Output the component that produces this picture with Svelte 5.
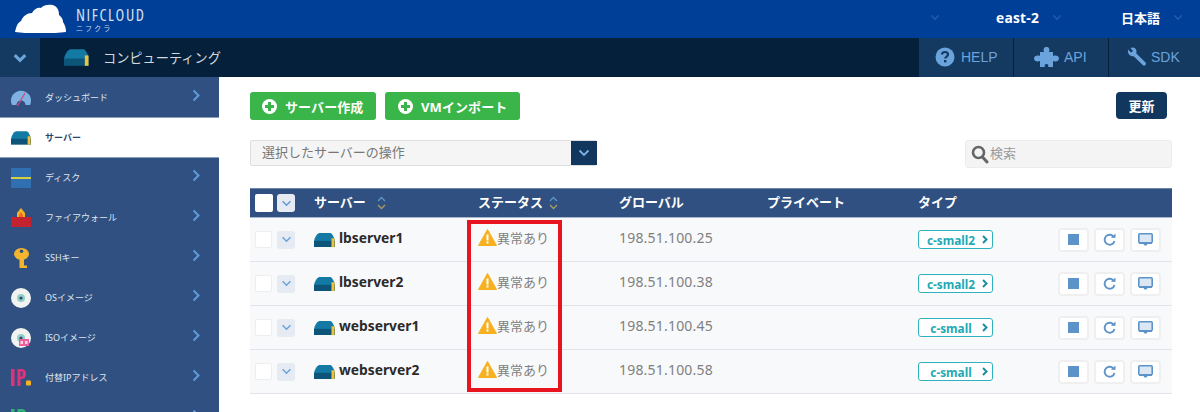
<script>
  const nav = [
    { label: 'ダッシュボード', icon: 'dash' },
    { label: 'サーバー', icon: 'server', active: true },
    { label: 'ディスク', icon: 'disk' },
    { label: 'ファイアウォール', icon: 'fw' },
    { label: 'SSHキー', icon: 'key' },
    { label: 'OSイメージ', icon: 'os' },
    { label: 'ISOイメージ', icon: 'iso' },
    { label: '付替IPアドレス', icon: 'ip' },
    { label: '', icon: 'ip2' }
  ];
  const rows = [
    { name: 'lbserver1', ip: '198.51.100.25', type: 'c-small2' },
    { name: 'lbserver2', ip: '198.51.100.38', type: 'c-small2' },
    { name: 'webserver1', ip: '198.51.100.45', type: 'c-small' },
    { name: 'webserver2', ip: '198.51.100.58', type: 'c-small' }
  ];
</script>

{#snippet serverIcon(w, h)}
  <svg width={w} height={h} viewBox="0 0 24 16">
    <path d="M0 15V9C1 5 3 1 6 0H19C21 1 23 5 24 9V15Z" fill="#127aa3" />
    <path d="M0 9H24V16H0Z" fill="#0c5478" />
    <rect x="20" y="6" width="3.5" height="10" fill="#f0c23c" />
  </svg>
{/snippet}

{#snippet chev(color, w, h, sw)}
  <svg width={w} height={h} viewBox="0 0 12 8"><path d="M1.5 1.5L6 6L10.5 1.5" fill="none" stroke={color} stroke-width={sw} /></svg>
{/snippet}

{#snippet sort(cls)}
  <svg class={cls} width="9" height="14" viewBox="0 0 9 14">
    <path d="M1 5L4.5 1.5L8 5" fill="none" stroke="#5f94c8" stroke-width="1.4" />
    <path d="M1 9L4.5 12.5L8 9" fill="none" stroke="#a89a63" stroke-width="1.4" />
  </svg>
{/snippet}

{#snippet ipIcon(color)}
  <svg width="20" height="17" viewBox="0 0 20 17"><rect width="3.5" height="17" fill={color} /><path d="M6.500 17V0H11C16.500 0 16.500 10 11 10H9.500V17Z" fill={color} /><rect x="9.500" y="2.500" width="2" height="5" fill="#2f5080" /><rect x="15" y="11.500" width="5" height="5" rx="1" fill="#f5b324" /></svg>
{/snippet}

<div class="page">
  <header class="top">
    <div class="brand">
      <svg width="52" height="30" viewBox="0 0 52 30">
        <path d="M0 29C1 25 2 20 6 18C8 13 12 10 17 10C19 6 23 4 26 5C29 1 37 1 40 3C43 5 44 8 44 12C47 14 48 17 48 19C50 22 51 25 51 29C35 31 15 31 0 29Z" fill="#fff" />
      </svg>
      <div class="brandtext">
        <span class="logo">NIFCLOUD</span>
        <span class="kana">ニフクラ</span>
      </div>
    </div>
    <div class="topright">
      <span class="tchev c1">{@render chev('#2b63b3', 10, 7, 1.3)}</span>
      <b class="region">east-2</b>
      <span class="tchev c2">{@render chev('#2b63b3', 10, 7, 1.3)}</span>
      <b class="lang">日本語</b>
      <span class="tchev c3">{@render chev('#2b63b3', 10, 7, 1.3)}</span>
    </div>
  </header>

  <div class="sub">
    <div class="toggle">{@render chev('#6ba6dc', 14, 10, 2.6)}</div>
    <div class="crumb">
      {@render serverIcon(25, 17)}
      <span>コンピューティング</span>
    </div>
    <div class="tools">
      <div class="tool t1">
        <svg width="20" height="20" viewBox="0 0 20 20"><circle cx="10" cy="10" r="9.5" fill="#6ba3dc" /><path d="M7 7.6C7 5.8 8.4 5 10 5C11.8 5 13 6 13 7.5C13 9.5 10.2 9.6 10.2 11.6" fill="none" stroke="#153a62" stroke-width="2.2" /><rect x="9" y="13" width="2.4" height="2.4" fill="#153a62" /></svg>
        <span>HELP</span>
      </div>
      <div class="tool t2">
        <svg width="25" height="21" viewBox="0 0 25 21"><path d="M6 5H10C9 2 10 0 12.5 0C15 0 16 2 15 5H19V9C22 8 25 9 25 11.5C25 14 22 15 19 14V20H14C15 18 14 17 12.5 17C11 17 10 18 11 20H6V14C3 15 0 14 0 11.5C0 9 3 8 6 9Z" fill="#6ba3dc" /></svg>
        <span>API</span>
      </div>
      <div class="tool t3">
        <svg width="20" height="20" viewBox="0 0 20 20"><path d="M1 2.5L4 5.5L6 4L3.5 1C6 -.5 9.5 1 9.5 4.5C9.5 5.2 9.4 5.8 9.2 6.3L18.5 15.5C20 17 17.5 19.8 16 18.2L6.7 9.2C3.5 10 .2 7 1 2.5Z" fill="#6ba3dc" /></svg>
        <span>SDK</span>
      </div>
    </div>
  </div>

  <div class="body">
    <nav class="side">
      {#each nav as n}
        <div class="item" class:active={n.active}>
          <span class="ico">
            {#if n.icon === 'dash'}
              <svg width="20" height="18" viewBox="0 0 20 18"><path d="M1 17A10 10 0 1 1 19 17Z" fill="#7fb2e3" /><circle cx="10" cy="17" r="4.500" fill="#2f5080" /><path d="M6.500 18L14 5" stroke="#d8447c" stroke-width="1.200" /></svg>
            {:else if n.icon === 'server'}
              {@render serverIcon(20, 16)}
            {:else if n.icon === 'disk'}
              <svg width="20" height="20" viewBox="0 0 20 20"><rect width="20" height="9" fill="#2f6fb2" /><rect y="9" width="20" height="2" fill="#d8cf3c" /><rect y="11" width="20" height="9" fill="#2f6fb2" /></svg>
            {:else if n.icon === 'fw'}
              <svg width="20" height="19" viewBox="0 0 20 19"><path d="M10 0L14 5V9H6V5Z" fill="#f5b324" /><path d="M10 4L12 7V9H8V7Z" fill="#ee6a2a" /><rect y="9" width="20" height="10" fill="#c3232f" /></svg>
            {:else if n.icon === 'key'}
              <svg width="15" height="20" viewBox="0 0 15 20"><ellipse cx="7.500" cy="6" rx="7.500" ry="6" fill="#f3b52d" /><rect x="5.500" y="8" width="4.500" height="12" fill="#f3b52d" /><rect x="9" y="17.500" width="4" height="2.500" fill="#f3b52d" /><circle cx="7.500" cy="3.200" r="1.800" fill="#2f5080" /></svg>
            {:else if n.icon === 'os'}
              <svg width="20" height="20" viewBox="0 0 20 20"><circle cx="10" cy="10" r="10" fill="#f2f3f1" /><circle cx="10" cy="10" r="4" fill="#93cfc9" /><circle cx="10" cy="10" r="1.600" fill="#2f4a6a" /></svg>
            {:else if n.icon === 'iso'}
              <svg width="20" height="20" viewBox="0 0 20 20"><circle cx="10" cy="10" r="10" fill="#f2f3f1" /><circle cx="10" cy="10" r="4" fill="#93cfc9" /><circle cx="10" cy="10" r="1.600" fill="#2f4a6a" /><rect x="8" y="11" width="10" height="7" fill="#ec5f9f" /><rect x="9.500" y="13" width="2.500" height="3" fill="#fbd3e5" /><rect x="14" y="13" width="2.500" height="3" fill="#fbd3e5" /></svg>
            {:else if n.icon === 'ip'}
              {@render ipIcon('#e0327a')}
            {:else}
              {@render ipIcon('#2bb673')}
            {/if}
          </span>
          <span class="label">{n.label}</span>
          {#if !n.active}
            <svg class="arrow" width="8" height="13" viewBox="0 0 8 13"><path d="M1.500 1.500L6.500 6.500L1.500 11.500" fill="none" stroke="#5f9bdb" stroke-width="2" /></svg>
          {/if}
        </div>
      {/each}
    </nav>

    <main class="main">
      <div class="actions">
        <button class="green b1"><span class="plus"></span>サーバー作成</button>
        <button class="green b2"><span class="plus"></span>VMインポート</button>
        <button class="refresh">更新</button>
      </div>

      <div class="filters">
        <div class="select">
          <span class="seltext">選択したサーバーの操作</span>
          <span class="selbtn">{@render chev('#7fb0e0', 12, 8, 1.8)}</span>
        </div>
        <div class="search">
          <svg width="18" height="19" viewBox="0 0 18 19"><circle cx="7.500" cy="7.500" r="5.500" fill="none" stroke="#666" stroke-width="2.600" /><path d="M11.500 12L16 17" stroke="#666" stroke-width="3" stroke-linecap="round" /></svg>
          <span class="searchtext">検索</span>
        </div>
      </div>

      <div class="table">
        <div class="row head">
          <div class="checks"><span class="box hbox"></span><span class="drop hdrop">{@render chev('#5f9bdb', 11, 7, 1.800)}</span></div>
          <div class="ht">サーバー{@render sort('sort')}</div>
          <div class="ht">ステータス{@render sort('sort near')}</div>
          <div class="ht">グローバル</div>
          <div class="ht">プライベート</div>
          <div class="ht">タイプ</div>
          <div></div>
        </div>
        {#each rows as r}
          <div class="row">
            <div class="checks"><span class="box"></span><span class="drop">{@render chev('#6ba3dc', 11, 7, 1.800)}</span></div>
            <div class="name">{@render serverIcon(21, 14)}<span class="nametext">{r.name}</span></div>
            <div class="status">
              <svg width="19" height="17" viewBox="0 0 18 17"><path d="M9 0.500L18 16.500H0Z" fill="#f7b11f" stroke="#f7b11f" stroke-linejoin="round" /><rect x="8" y="5.500" width="2" height="6" fill="#fff" /><rect x="8" y="12.500" width="2" height="2" fill="#fff" /></svg>
              <span>異常あり</span>
            </div>
            <div class="ip">{r.ip}</div>
            <div></div>
            <div class="typecell"><span class="type"><span class="tname">{r.type}</span><svg width="6" height="9" viewBox="0 0 6 9"><path d="M1 1L4.500 4.500L1 8" fill="none" stroke="#1b8fa2" stroke-width="2" /></svg></span></div>
            <div class="ops">
              <span class="op"><i class="stop"></i></span>
              <span class="op"><svg width="13" height="13" viewBox="0 0 13 13"><path d="M11 4.200A5 5 0 1 0 11.500 8" fill="none" stroke="#5c93c9" stroke-width="1.900" /><path d="M8 4.800H12.500V.5Z" fill="#5c93c9" /></svg></span>
              <span class="op"><svg width="15" height="13" viewBox="0 0 15 13"><rect x=".8" y=".8" width="13.400" height="9" rx="1" fill="#dbe8f4" stroke="#5c93c9" stroke-width="1.600" /><path d="M1 9.500H14V11H9.500L8.500 12.500H6.500L5.500 11H1Z" fill="#5c93c9" /></svg></span>
            </div>
          </div>
        {/each}
        <div class="alert"></div>
      </div>
    </main>
  </div>
</div>

<style>
  :global(body) { margin: 0; background: #fff; }
  .page {
    width: 1200px; height: 412px; overflow: hidden;
    font-family: "Noto Sans", "Noto Sans CJK JP", sans-serif;
    color: #333;
  }
  .top {
    height: 38px; background: #003f98; display: flex; justify-content: space-between;
    padding-left: 15px; box-sizing: border-box; color: #fff;
  }
  .brand { display: flex; align-items: flex-start; padding-top: 3px; }
  .brandtext { display: flex; flex-direction: column; margin-left: 9px; margin-top: 5px; }
  .logo { font-family: "Open Sans", sans-serif; font-stretch: condensed; font-size: 16px; line-height: 15px; letter-spacing: 1.600px; color: #d5e0ef; }
  .kana { font-size: 7px; line-height: 9px; letter-spacing: 2.100px; margin-top: 1px; color: #c8d6ea; }
  .topright { display: flex; align-items: center; font-size: 13px; padding-bottom: 3px; }
  .tchev { display: flex; }
  .c1 { margin-right: 56px; }
  .c2 { margin: 0 59px 0 13px; }
  .c3 { margin: 0 17px 0 13px; }
  .region { font-family: "Open Sans", sans-serif; font-size: 13.800px; letter-spacing: .2px; }
  .sub { height: 39px; background: #05203b; display: flex; }
  .toggle { width: 40px; background: #153a62; display: flex; align-items: center; justify-content: center; }
  .crumb { display: flex; align-items: center; gap: 14px; padding-left: 24px; color: #d3d8de; font-size: 13.200px; flex: 1; }
  .tools { display: flex; }
  .tool { display: flex; align-items: center; gap: 6px; background: #153a62; color: #6ba3dc; font-family: "Liberation Sans", sans-serif; font-size: 14px; box-sizing: border-box; border-left: 1px solid #05203b; padding-left: 16px; padding-bottom: 1px; }
  .t1 { width: 95px; }
  .t2 { width: 95px; padding-left: 20px; gap: 5px; }
  .t3 { width: 92px; padding-left: 18px; gap: 4px; }
  .body { display: flex; height: 335px; }
  .side { width: 219px; box-sizing: border-box; background: #2f5080; flex: none; }
  .item {
    height: 40px; box-sizing: border-box; display: flex; align-items: center;
    color: #dfe5ee; font-size: 9px; border-bottom: 1px solid #2f5080; padding-left: 11px;
  }
  .item:first-child { border-bottom-color: #8aa0bd; height: 41px; }
  .item.active { background: #fff; color: #26466f; font-weight: 700; border-bottom-color: #8aa0bd; }
  .ico { width: 20px; height: 20px; display: flex; align-items: center; justify-content: center; margin-right: 14px; }
  .label { flex: 1; }
  .arrow { margin-right: 19px; margin-top: -4px; }
  .main { flex: 1; padding: 15px 28px 0 31px; box-sizing: border-box; }
  .actions { display: flex; height: 28px; align-items: flex-start; }
  button { font-family: inherit; border: 0; padding: 0; margin: 0; }
  .green {
    height: 28px; background: #3ab54a; color: #fff; border-radius: 3px; font-weight: 700; font-size: 13px;
    display: flex; align-items: center; box-sizing: border-box; padding-left: 12px; letter-spacing: .1px;
  }
  .b1 { width: 126px; margin-right: 9px; }
  .b2 { width: 135px; padding-left: 13px; }
  .plus {
    width: 15px; height: 15px; border-radius: 50%; margin-right: 8px; flex: none;
    background:
      linear-gradient(#3ab54a, #3ab54a) center / 9px 3px no-repeat,
      linear-gradient(#3ab54a, #3ab54a) center / 3px 9px no-repeat,
      #fff;
  }
  .refresh {
    margin-left: auto; margin-right: 5px; width: 51px; height: 27px; border-radius: 4px; background: #12375f; color: #fff; font-weight: 700; font-size: 13px;
  }
  .filters { display: flex; justify-content: space-between; margin-top: 20px; align-items: flex-start; }
  .select {
    width: 347px; height: 26px; box-sizing: border-box; border: 1px solid #dedede; border-radius: 2px; background: #f5f5f5;
    display: flex; align-items: center; justify-content: space-between; color: #777; font-size: 13px; padding-left: 11px;
  }
  .seltext { margin-top: -4px; }
  .selbtn { width: 26px; height: 24px; margin-right: -1px; background: #12375f; display: flex; align-items: center; justify-content: center; }
  .search {
    width: 207px; height: 28px; box-sizing: border-box; background: #f4f4f4; border-radius: 3px; border: 1px solid #ececec;
    display: flex; align-items: center; padding-left: 5px; gap: 1px; color: #9a9a9a; font-size: 13px;
  }
  .searchtext { margin-top: -4px; }
  .table { margin-top: 20px; position: relative; width: 922px; }
  .row {
    display: grid; grid-template-columns: 64px 164px 141px 148px 151px 140px 114px; height: 44px; box-sizing: border-box;
    align-items: center; background: #f8f9fa; border-bottom: 1px solid #e1e4ea;
  }
  .head { height: 30px; background: #2f5080; color: #fff; font-weight: 700; font-size: 13px; border-top: 1px solid #6d86a8; border-bottom: 1px solid #aab8cc; }
  .ht { margin-top: -4px; }
  .sort { margin-left: 11px; vertical-align: -3px; }
  .near { margin-left: 6px; }
  .checks { display: flex; align-items: center; padding-left: 5px; gap: 5px; }
  .box { width: 17px; height: 17px; background: #fff; border: 1px solid #eeeeee; border-radius: 2px; box-sizing: border-box; }
  .hbox { border: 0; width: 18px; height: 18px; margin-right: -1px; }
  .drop { width: 18px; height: 18px; border-radius: 3px; background: #e6ebf3; display: flex; align-items: center; justify-content: center; }
  .name { display: flex; align-items: center; gap: 4px; font-weight: 700; font-size: 13.800px; color: #2b2b2b; }
  .nametext { margin-top: -4px; }
  .status { display: flex; align-items: center; color: #808080; font-size: 13px; margin-top: -4px; }
  .ip { color: #808080; font-size: 14px; letter-spacing: .2px; margin-top: -4px; }
  .typecell { margin-top: -2px; }
  .type {
    display: inline-flex; width: 75px; height: 19px; box-sizing: border-box; border: 1px solid #2fb2c0; border-radius: 3px; background: #fff;
    align-items: center; justify-content: flex-end; padding-right: 4px; gap: 4px; color: #23a8b6; font-size: 11.800px; font-weight: 700;
  }
  .tname { flex: 1; text-align: center; padding-left: 5px; }
  .ops { display: flex; gap: 5px; }
  .op {
    width: 31px; height: 24px; background: #fff; border: 2px solid #efefef; border-radius: 4px; box-sizing: border-box;
    display: flex; align-items: center; justify-content: center;
  }
  .stop { width: 11px; height: 11px; background: #5c93c9; display: block; }
  .alert { position: absolute; left: 217px; top: 32px; width: 95px; height: 172px; box-sizing: border-box; border: 4px solid #e8141f; }
</style>
